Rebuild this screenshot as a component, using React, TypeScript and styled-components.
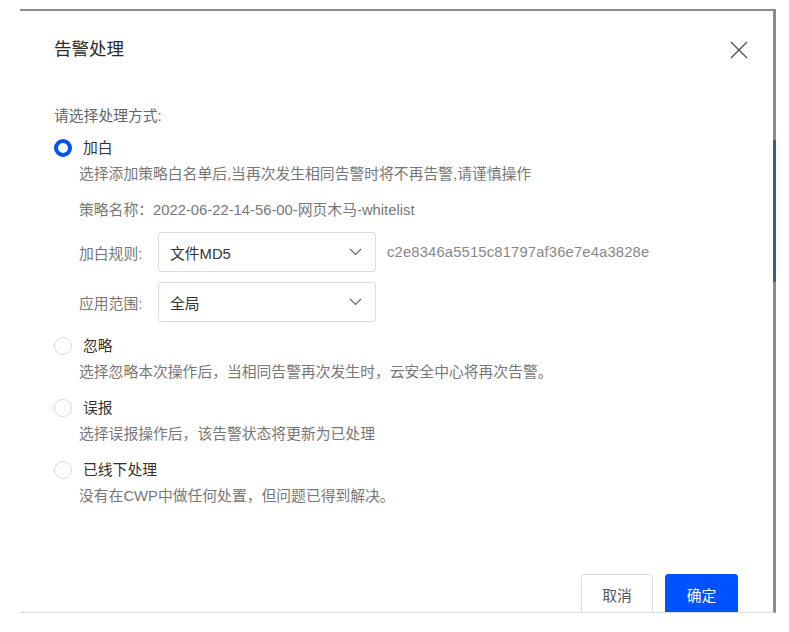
import React, { useState } from "react";
import styled, { createGlobalStyle } from "styled-components";

const GlobalStyle = createGlobalStyle`
  html, body {
    margin: 0;
    padding: 0;
    background: #fff;
  }
  body {
    font-family: "Liberation Sans", "Noto Sans CJK SC", sans-serif;
    -webkit-font-smoothing: antialiased;
  }
`;

// -------------------- FRAME & DIALOG -------------------- //

const Frame = styled.div`
  position: relative;
  box-sizing: border-box;
  margin: 9px 0 0 20px;
  width: 756px;
  height: 604px;
  border-top: 2px solid #8c8c8c;
  border-right: 3px solid #8c8c8c;
  border-bottom: 1px solid #dedede;
  background: #fff;
`;

// the page's scrollbar thumb peeking out on the right edge
const ScrollThumb = styled.div`
  position: absolute;
  top: 129px;
  right: -3px;
  width: 3px;
  height: 142px;
  background: #3f5a92;
`;

const Dialog = styled.div`
  box-sizing: border-box;
  height: 100%;
  overflow: hidden;
  display: flex;
  flex-direction: column;
  padding: 25px 35px 0 34px;
`;

const Header = styled.div`
  display: flex;
  align-items: center;
  justify-content: space-between;
  height: 24px;
  margin-top: 1px;
`;

const Title = styled.h2`
  margin: 0;
  font-size: 17.5px;
  font-weight: 400;
  line-height: 24px;
  color: #2b2b2b;
`;

const CloseButton = styled.button`
  border: 0;
  background: none;
  padding: 0;
  width: 20px;
  height: 20px;
  margin-top: 2px;
  margin-right: -11px;
  cursor: pointer;
  display: flex;
  align-items: center;
  justify-content: center;
`;

const Prompt = styled.div`
  margin-top: 44px;
  font-size: 14.8px;
  line-height: 22px;
  color: #666;
`;

const OptionList = styled.div`
  display: flex;
  flex-direction: column;
  gap: 14px;
  margin-top: 10px;
`;

const Option = styled.div`
  display: flex;
  flex-direction: column;
`;

const OptionHead = styled.label`
  display: flex;
  align-items: center;
  gap: 11px;
  height: 22px;
  cursor: pointer;
`;

const Radio = styled.span<{ checked: boolean }>`
  box-sizing: border-box;
  width: 18px;
  height: 18px;
  border-radius: 50%;
  border: ${({ checked }) => (checked ? "4.5px solid #0052ff" : "1px solid #d9d9d9")};
  background: #fff;
`;

const OptionLabel = styled.span`
  font-size: 14.8px;
  line-height: 22px;
  color: #333;
`;

const OptionBody = styled.div`
  display: flex;
  flex-direction: column;
  padding-left: 25px;
  margin-top: 4px;
`;

const Desc = styled.div`
  font-size: 14.8px;
  line-height: 22px;
  color: #777;
`;

const PolicyName = styled(Desc)`
  margin-top: 14px;
`;

const FieldGroup = styled.div`
  display: flex;
  flex-direction: column;
  gap: 10px;
  margin-top: 11px;
  margin-bottom: -1px;
`;

const FieldRow = styled.div`
  display: flex;
  align-items: center;
`;

const FieldLabel = styled.span`
  width: 79px;
  font-size: 14.8px;
  color: #777;
`;

const Select = styled.div`
  box-sizing: border-box;
  width: 218px;
  height: 40px;
  border: 1px solid #dcdcdc;
  border-radius: 3px;
  display: flex;
  align-items: center;
  justify-content: space-between;
  padding: 0 13px 0 11px;
  font-size: 14.8px;
  color: #333;
  cursor: pointer;
`;

const Hash = styled.span`
  margin-left: 11px;
  font-size: 14.8px;
  letter-spacing: 0.15px;
  color: #888;
`;

const Footer = styled.div`
  display: flex;
  justify-content: flex-end;
  gap: 12px;
  margin-top: 67px;
`;

const Button = styled.button<{ primary?: boolean }>`
  box-sizing: border-box;
  width: ${({ primary }) => (primary ? "73px" : "72px")};
  height: 40px;
  border-radius: 3px;
  font-family: inherit;
  font-size: 14.8px;
  cursor: pointer;
  border: 1px solid ${({ primary }) => (primary ? "#0052ff" : "#dcdcdc")};
  background: ${({ primary }) => (primary ? "#0052ff" : "#fff")};
  color: ${({ primary }) => (primary ? "#fff" : "#555")};
`;

// -------------------- ICONS -------------------- //

const CloseIcon = () => (
  <svg width="18" height="18" viewBox="0 0 18 18">
    <path d="M1 1 L17 17 M17 1 L1 17" stroke="#555" strokeWidth="1.4" fill="none" />
  </svg>
);

const Chevron = () => (
  <svg width="13" height="8" viewBox="0 0 13 8">
    <path d="M1 1 L6.5 6.5 L12 1" stroke="#666" strokeWidth="1.2" fill="none" />
  </svg>
);

// -------------------- DATA -------------------- //

const otherOptions = [
  { key: "ignore", label: "忽略", desc: "选择忽略本次操作后，当相同告警再次发生时，云安全中心将再次告警。" },
  { key: "false", label: "误报", desc: "选择误报操作后，该告警状态将更新为已处理" },
  { key: "offline", label: "已线下处理", desc: "没有在CWP中做任何处置，但问题已得到解决。" },
];

// -------------------- MAIN COMPONENT -------------------- //

const App: React.FC = () => {
  const [choice, setChoice] = useState("white");

  return (
    <>
      <GlobalStyle />
      <Frame>
        <ScrollThumb />
        <Dialog>
          <Header>
            <Title>告警处理</Title>
            <CloseButton aria-label="关闭">
              <CloseIcon />
            </CloseButton>
          </Header>

          <Prompt>请选择处理方式:</Prompt>

          <OptionList>
            <Option>
              <OptionHead onClick={() => setChoice("white")}>
                <Radio checked={choice === "white"} />
                <OptionLabel>加白</OptionLabel>
              </OptionHead>
              <OptionBody>
                <Desc>选择添加策略白名单后,当再次发生相同告警时将不再告警,请谨慎操作</Desc>
                <PolicyName>策略名称：2022-06-22-14-56-00-网页木马-whitelist</PolicyName>
                <FieldGroup>
                  <FieldRow>
                    <FieldLabel>加白规则:</FieldLabel>
                    <Select>
                      文件MD5
                      <Chevron />
                    </Select>
                    <Hash>c2e8346a5515c81797af36e7e4a3828e</Hash>
                  </FieldRow>
                  <FieldRow>
                    <FieldLabel>应用范围:</FieldLabel>
                    <Select>
                      全局
                      <Chevron />
                    </Select>
                  </FieldRow>
                </FieldGroup>
              </OptionBody>
            </Option>

            {otherOptions.map((opt) => (
              <Option key={opt.key}>
                <OptionHead onClick={() => setChoice(opt.key)}>
                  <Radio checked={choice === opt.key} />
                  <OptionLabel>{opt.label}</OptionLabel>
                </OptionHead>
                <OptionBody>
                  <Desc>{opt.desc}</Desc>
                </OptionBody>
              </Option>
            ))}
          </OptionList>

          <Footer>
            <Button>取消</Button>
            <Button primary>确定</Button>
          </Footer>
        </Dialog>
      </Frame>
    </>
  );
};

export default App;
